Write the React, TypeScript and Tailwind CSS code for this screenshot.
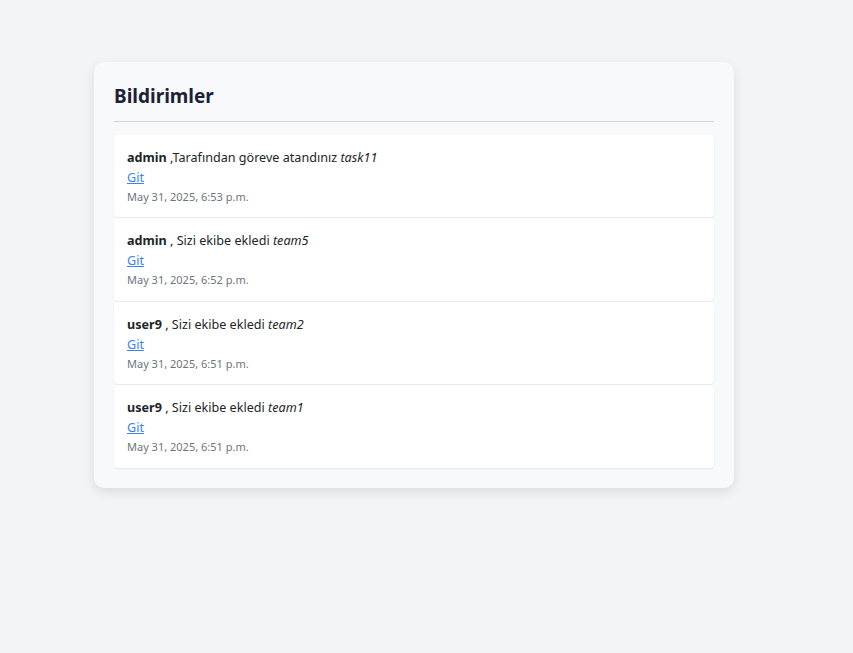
import React from 'react';

interface Notice {
  user: string;
  text: string;
  target: string;
  date: string;
}

const notices: Notice[] = [
  { user: 'admin', text: ' ,Tarafından göreve atandınız ', target: 'task11', date: 'May 31, 2025, 6:53 p.m.' },
  { user: 'admin', text: ' , Sizi ekibe ekledi ', target: 'team5', date: 'May 31, 2025, 6:52 p.m.' },
  { user: 'user9', text: ' , Sizi ekibe ekledi ', target: 'team2', date: 'May 31, 2025, 6:51 p.m.' },
  { user: 'user9', text: ' , Sizi ekibe ekledi ', target: 'team1', date: 'May 31, 2025, 6:51 p.m.' },
];

const App: React.FC = () => {
  return (
    <div
      className="min-h-[653px] bg-[#f3f4f6] pt-[62px] pl-[94px]"
      style={{ fontFamily: '"Noto Sans", "Open Sans", sans-serif' }}
    >
      <div className="w-[640px] rounded-[10px] bg-[#f8f9fa] p-5 shadow-[0_4px_12px_rgba(0,0,0,0.1)]">
        <h2 className="text-[19px] font-bold leading-[28px] text-[#1b2236]">Bildirimler</h2>
        <hr className="mt-[11px] mb-[13px] border-t border-[#d1d5db]" />
        <div className="flex flex-col gap-px">
          {notices.map((n, idx) => (
            <div
              key={idx}
              className="rounded-[4px] bg-white px-[13px] pt-3 pb-[12.4px] shadow-[0_1px_2px_rgba(0,0,0,0.08)]"
            >
              <p className="text-[12.6px] leading-[21px] text-[#212529]">
                <strong className="font-bold">{n.user}</strong>
                {n.text}
                <em>{n.target}</em>
              </p>
              <a href="#" className="block text-[12.6px] leading-5 text-[#3b82f6] underline">
                Git
              </a>
              <p className="text-[11px] leading-[17px] text-[#6c757d]">{n.date}</p>
            </div>
          ))}
        </div>
      </div>
    </div>
  );
};

export default App;
